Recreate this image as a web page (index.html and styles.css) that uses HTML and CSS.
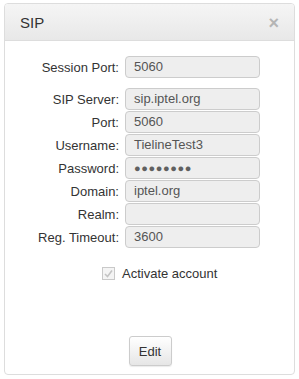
FILE: index.html
```html
<!DOCTYPE html>
<html lang="en">
<head>
    <meta charset="UTF-8">
    <title>SIP</title>
    <link rel="stylesheet" href="styles.css">
</head>
<body>
    <div class="panel">
        <div class="panel-header">
            <span class="panel-title">SIP</span>
            <span class="close">&times;</span>
        </div>
        <div class="panel-body">
            <div class="form-grid">
                <label>Session Port:</label>
                <div class="field">5060</div>
            </div>

            <div class="form-grid group">
                <label>SIP Server:</label>
                <div class="field">sip.iptel.org</div>
                <label>Port:</label>
                <div class="field">5060</div>
                <label>Username:</label>
                <div class="field">TielineTest3</div>
                <label>Password:</label>
                <div class="field password">&#9679;&#9679;&#9679;&#9679;&#9679;&#9679;&#9679;&#9679;</div>
                <label>Domain:</label>
                <div class="field">iptel.org</div>
                <label>Realm:</label>
                <div class="field"></div>
                <label>Reg. Timeout:</label>
                <div class="field">3600</div>
            </div>

            <div class="check-row">
                <span class="checkbox">
                    <svg width="9" height="9" viewBox="0 0 9 9"><path d="M1 5 L3.5 7.5 L8 1.5" fill="none" stroke="#c4c4c4" stroke-width="1.6"/></svg>
                </span>
                <span>Activate account</span>
            </div>

            <div class="actions">
                <button class="btn">Edit</button>
            </div>
        </div>
    </div>
</body>
</html>
```

FILE: styles.css
```css
body {
    margin: 0;
    background-color: #fff;
    font-family: "Liberation Sans", Arial, sans-serif;
    color: #333;
}
.panel {
    margin: 3px 0 0 4px;
    width: 291px;
    height: 372px;
    box-sizing: border-box;
    border: 1px solid #ddd;
    border-radius: 4px;
    display: flex;
    flex-direction: column;
}
.panel-header {
    height: 37px;
    box-sizing: border-box;
    padding: 0 15px;
    background: linear-gradient(#f5f5f5, #e8e8e8);
    border-bottom: 1px solid #ddd;
    border-radius: 3px 3px 0 0;
    display: flex;
    align-items: center;
    justify-content: space-between;
}
.panel-title {
    font-size: 15px;
    color: #333;
}
.close {
    font-size: 18px;
    font-weight: bold;
    color: #b5b5b5;
    margin-top: 3px;
}
.panel-body {
    flex: 1;
    display: flex;
    flex-direction: column;
    padding-top: 15px;
}
.form-grid {
    display: grid;
    grid-template-columns: 114px 135px;
    column-gap: 6px;
    row-gap: 1px;
    align-items: center;
    font-size: 13px;
}
.form-grid.group {
    margin-top: 10px;
}
.form-grid label {
    text-align: right;
    color: #333;
}
.field {
    height: 22px;
    box-sizing: border-box;
    border: 1px solid #ccc;
    border-radius: 4px;
    background-color: #eee;
    color: #555;
    padding: 0 8px;
    line-height: 20px;
}
.password {
    font-size: 11px;
    letter-spacing: 0.6px;
    color: #606060;
}
.check-row {
    display: flex;
    align-items: center;
    gap: 7px;
    margin: 18px 0 0 97px;
    font-size: 13px;
}
.checkbox {
    width: 11px;
    height: 11px;
    border: 1px solid #c9c9c9;
    background: #f4f4f4;
    display: flex;
    align-items: center;
    justify-content: center;
}
.actions {
    margin-top: auto;
    margin-bottom: 8px;
    display: flex;
    justify-content: center;
}
.btn {
    font-family: "Liberation Sans", Arial, sans-serif;
    font-size: 13px;
    color: #333;
    width: 43px;
    height: 30px;
    border: 1px solid #ccc;
    border-radius: 3px;
    background: linear-gradient(#fff, #e6e6e6);
    box-shadow: 0 1px 1px rgba(0,0,0,0.08);
    margin-left: 1px;
}
```
